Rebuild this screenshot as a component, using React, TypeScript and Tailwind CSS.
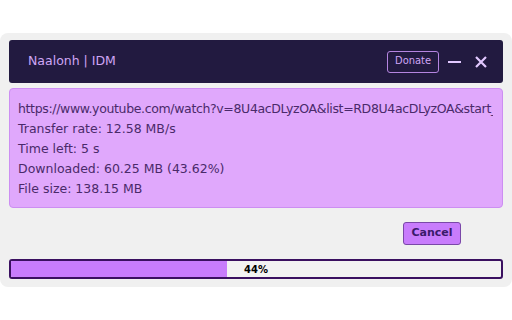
import React from 'react';

const url = 'https://www.youtube.com/watch?v=8U4acDLyzOA&list=RD8U4acDLyzOA&start_radio=1';

export default function App() {
  const percent = 44;

  return (
    <div className="h-[320px] w-[512px] bg-white pt-[33px] font-['DejaVu_Sans',sans-serif]">
      <div className="flex h-[254px] flex-col rounded-lg bg-[#f0f0f0] px-[9px] pt-[7px]">
        {/* title bar */}
        <div className="flex h-[43px] items-center rounded-[3px] bg-[#221a40] pl-[19px] pr-[16px]">
          <span className="text-[12.5px] text-[#cfa6f5]">Naalonh | IDM</span>
          <div className="ml-auto flex items-center">
            <button className="flex h-[22px] items-center rounded-[3px] border border-[#b585e0] px-[7px] font-['DejaVu_Sans_Condensed',sans-serif] text-[11px] text-[#cfa6f5]">
              Donate
            </button>
            <span className="ml-[9px] block h-[2px] w-[13px] bg-[#e2c8ff]" />
            <svg className="ml-[14px]" width="12" height="12" viewBox="0 0 12 12">
              <path d="M1 1L11 11M11 1L1 11" stroke="#e2c8ff" strokeWidth="2.2" />
            </svg>
          </div>
        </div>

        {/* info box */}
        <div className="mt-[5px] flex h-[120px] flex-col overflow-hidden rounded-[4px] border border-[#cc8ef2] bg-[#e0a8fc] pl-[8px] pr-[9px] pt-[10px] text-[12.5px] leading-[20px] text-[#4a2a6a]">
          <div className="overflow-hidden whitespace-nowrap tracking-[-0.35px]">{url}</div>
          <div>Transfer rate: 12.58 MB/s</div>
          <div>Time left: 5 s</div>
          <div>Downloaded: 60.25 MB (43.62%)</div>
          <div>File size: 138.15 MB</div>
        </div>

        <div className="mt-[14px] flex justify-end pr-[42px]">
          <button className="flex h-[23px] w-[58px] items-center justify-center rounded-[3px] border border-[#7a48a8] bg-[#c87cfc] text-[11px] font-bold text-[#3a1a6a]">
            Cancel
          </button>
        </div>

        {/* progress */}
        <div className="relative mt-[14px] h-[20px] overflow-hidden rounded-[3px] border-2 border-[#3a1060] bg-[#f2f2f2]">
          <div className="h-full bg-[#c87cfc]" style={{ width: `${percent}%` }} />
          <span className="absolute inset-0 flex items-center justify-center text-[10px] font-bold text-black">
            {percent}%
          </span>
        </div>
      </div>
    </div>
  );
}
